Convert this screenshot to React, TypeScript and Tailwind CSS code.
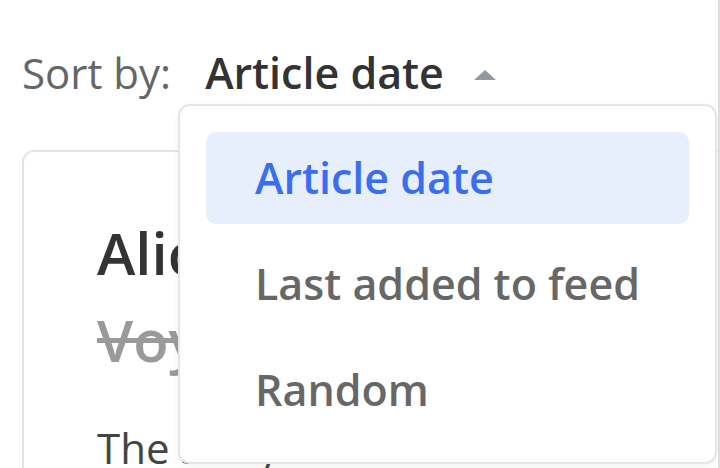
export default function App() {
  const items = ["Article date", "Last added to feed", "Random"];
  return (
    <div
      className="relative w-[720px] h-[468px] overflow-hidden bg-white border-r-2 border-[#dedede]"
      style={{ fontFamily: '"Open Sans", "Noto Sans", sans-serif' }}
    >
      {/* sort header */}
      <div className="flex items-center pl-[22px] pt-[44px] leading-[58px] text-[42px]">
        <span className="text-[#666666]">Sort by:</span>
        <span className="ml-[34px] text-[43px] font-semibold text-[#333333]">Article date</span>
        <svg width="22" height="10" viewBox="0 0 22 10" className="ml-[30px] mt-[4px]">
          <path d="M0 10 L11 0 L22 10 Z" fill="#8d9aa4" />
        </svg>
      </div>

      {/* article card */}
      <div className="ml-[22px] mt-[48px] w-[720px] h-[400px] border-2 border-[#e4e4e4] rounded-[12px] pl-[73px] pt-[57px]">
        <div className="text-[58px] leading-[87px] font-semibold text-[#333333] whitespace-nowrap">
          Alice in the Woods
        </div>
        <div className="text-[58px] leading-[87px] font-semibold text-[#9a9a9a] line-through whitespace-nowrap">
          Voyage home
        </div>
        <p className="mt-[33px] text-[42px] leading-[63px] text-[#444444] whitespace-nowrap">
          The story continues
        </p>
      </div>

      {/* dropdown menu */}
      <div className="absolute left-[178px] top-[104px] w-[539px] flex flex-col gap-[14px] p-[26px] bg-white border-2 border-[#e6e6e6] rounded-[12px] shadow-[0_2px_6px_rgba(0,0,0,0.06)]">
        {items.map((label, i) => (
          <div
            key={label}
            className={
              i === 0
                ? "h-[92px] leading-[92px] pl-[49px] rounded-[10px] bg-[#e7effd] text-[#3a6ef2] text-[43px] font-semibold"
                : "h-[92px] leading-[92px] pl-[49px] rounded-[10px] text-[#676767] text-[43px] font-semibold"
            }
          >
            {label}
          </div>
        ))}
      </div>
    </div>
  );
}
